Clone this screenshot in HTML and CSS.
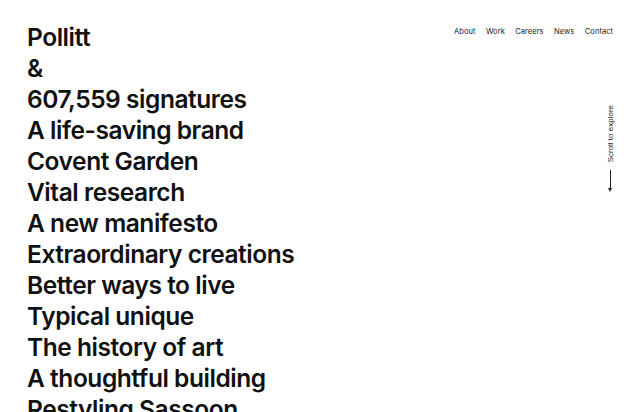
FILE: index.html
```html
<!DOCTYPE html>
<html>
<head>
<meta charset="utf-8">
<link rel="stylesheet" href="styles.css">
</head>
<body>
<div class="page">
  <ul class="projects">
    <li>Pollitt</li>
    <li>&amp;</li>
    <li>607,559 signatures</li>
    <li>A life-saving brand</li>
    <li>Covent Garden</li>
    <li>Vital research</li>
    <li>A new manifesto</li>
    <li>Extraordinary creations</li>
    <li>Better ways to live</li>
    <li>Typical unique</li>
    <li>The history of art</li>
    <li>A thoughtful building</li>
    <li>Restyling Sassoon</li>
  </ul>
  <nav class="nav">
    <a>About</a><a>Work</a><a>Careers</a><a>News</a><a>Contact</a>
  </nav>
</div>
<div class="scroll">
  <span class="scroll-text">Scroll to explore</span>
  <span class="scroll-line"></span>
</div>
</body>
</html>
```
FILE: styles.css
```css
html, body { margin: 0; padding: 0; background: #fff; overflow: hidden; height: 412px; }
body { font-family: Inter, "Liberation Sans", sans-serif; color: #111; }
.page { display: flex; justify-content: space-between; align-items: flex-start; padding: 0 27px 0 27px; }
.projects { list-style: none; margin: 0; padding: 22px 0 0 0; }
.projects li { font-size: 24.5px; font-weight: 600; line-height: 31px; letter-spacing: -0.45px; white-space: nowrap; }
.nav { display: flex; gap: 10.5px; padding-top: 26.5px; }
.nav a { font-size: 7.6px; color: #222; }
.scroll { position: absolute; left: 604px; top: 105px; display: flex; flex-direction: column; align-items: center; width: 12px; }
.scroll-text { writing-mode: vertical-rl; transform: rotate(180deg); font-size: 8px; color: #222; font-family: "Liberation Sans", sans-serif; }
.scroll-line { position: relative; display: block; width: 1px; height: 20px; background: #222; margin-top: 8px; }
.scroll-line::after { content: ""; position: absolute; left: -2px; bottom: -2px; border-left: 2.5px solid transparent; border-right: 2.5px solid transparent; border-top: 4px solid #222; }
```
